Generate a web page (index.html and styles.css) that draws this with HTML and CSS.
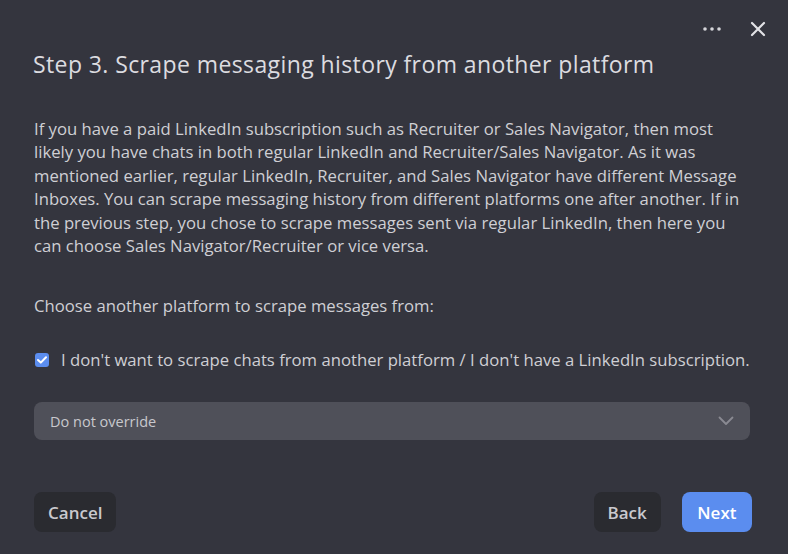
FILE: index.html
```html
<!DOCTYPE html>
<html>
<head>
<meta charset="utf-8">
<link rel="stylesheet" href="styles.css">
</head>
<body>
<div class="dialog">
  <div class="topbar">
    <button class="icon-btn dots" aria-label="More">
      <svg width="20" height="6" viewBox="0 0 20 6"><circle cx="3" cy="3" r="1.8" fill="#d6d6da"/><circle cx="10" cy="3" r="1.8" fill="#d6d6da"/><circle cx="17" cy="3" r="1.8" fill="#d6d6da"/></svg>
    </button>
    <button class="icon-btn close" aria-label="Close">
      <svg width="16" height="16" viewBox="0 0 16 16"><path d="M2 2L14 14M14 2L2 14" stroke="#e2e2e6" stroke-width="2.2" stroke-linecap="round"/></svg>
    </button>
  </div>
  <h1 class="title">Step 3. Scrape messaging history from another platform</h1>
  <p class="desc">If you have a paid LinkedIn subscription such as Recruiter or Sales Navigator, then most likely you have chats in both regular LinkedIn and Recruiter/Sales Navigator. As it was mentioned earlier, regular LinkedIn, Recruiter, and Sales Navigator have different Message Inboxes. You can scrape messaging history from different platforms one after another. If in the previous step, you chose to scrape messages sent via regular LinkedIn, then here you can choose Sales Navigator/Recruiter or vice versa.</p>
  <p class="choose">Choose another platform to scrape messages from:</p>
  <label class="check-row">
    <span class="checkbox">
      <svg width="10" height="8" viewBox="0 0 10 8"><path d="M1 4L3.8 6.6L9 1.2" stroke="#fff" stroke-width="2" fill="none" stroke-linecap="round" stroke-linejoin="round"/></svg>
    </span>
    <span class="check-label">I don't want to scrape chats from another platform / I don't have a LinkedIn subscription.</span>
  </label>
  <div class="select">
    <span class="select-text">Do not override</span>
    <svg class="chev" width="16" height="10" viewBox="0 0 16 10"><path d="M1.5 1.5L8 8L14.5 1.5" stroke="#8a8a92" stroke-width="1.8" fill="none" stroke-linecap="round" stroke-linejoin="round"/></svg>
  </div>
  <div class="footer">
    <button class="btn btn-dark">Cancel</button>
    <div class="right">
      <button class="btn btn-dark">Back</button>
      <button class="btn btn-primary">Next</button>
    </div>
  </div>
</div>
</body>
</html>
```

FILE: styles.css
```css
html, body {
  margin: 0;
  padding: 0;
  background: #34353e;
  width: 788px;
  height: 554px;
  overflow: hidden;
}
.dialog {
  font-family: "Open Sans", Lato, sans-serif;
  color: #cfcfd4;
  padding: 0 36px 0 34px;
  box-sizing: border-box;
  width: 788px;
  height: 554px;
  display: flex;
  flex-direction: column;
}
.topbar {
  display: flex;
  justify-content: flex-end;
  align-items: center;
  gap: 28px;
  height: 24px;
  margin-top: 17px;
  margin-right: -14px;
}
.icon-btn {
  background: none;
  border: none;
  padding: 0;
  display: flex;
  align-items: center;
  cursor: pointer;
}
.title {
  margin: 8px 0 0 -1px;
  font-size: 23px;
  font-weight: 400;
  color: #dcdce0;
  line-height: 30px;
  letter-spacing: 0.4px;
  white-space: nowrap;
}
.desc {
  margin: 37.5px 0 0 0;
  font-size: 16.7px;
  line-height: 23.5px;
  color: #cfcfd4;
}
.choose {
  margin: 36.5px 0 0 0;
  font-size: 16.7px;
  line-height: 23.5px;
}
.check-row {
  display: flex;
  align-items: center;
  gap: 12px;
  margin-top: 31.75px;
  margin-left: 1px;
}
.checkbox {
  width: 14px;
  height: 14px;
  border-radius: 3px;
  background: #5b8def;
  display: flex;
  align-items: center;
  justify-content: center;
  flex-shrink: 0;
}
.check-label {
  font-size: 16.7px;
  line-height: 21px;
  white-space: nowrap;
}
.select {
  margin-top: 32px;
  height: 38px;
  border-radius: 8px;
  background: #4f5059;
  display: flex;
  align-items: center;
  justify-content: space-between;
  padding: 0 16px 0 16px;
  margin-right: 2px;
}
.select-text {
  font-size: 14.5px;
  color: #c8c8cd;
}
.footer {
  margin-top: 52px;
  display: flex;
  justify-content: space-between;
  align-items: center;
}
.right {
  display: flex;
  gap: 21px;
}
.btn {
  font-family: "Open Sans", Lato, sans-serif;
  font-size: 17px;
  font-weight: 600;
  height: 40px;
  border: none;
  border-radius: 8px;
  padding: 0 14px;
  cursor: pointer;
}
.btn-dark {
  background: #2a2b30;
  color: #c9c9ce;
}
.btn-primary {
  background: #5b8def;
  color: #ffffff;
  padding: 0 15.5px;
}
```
